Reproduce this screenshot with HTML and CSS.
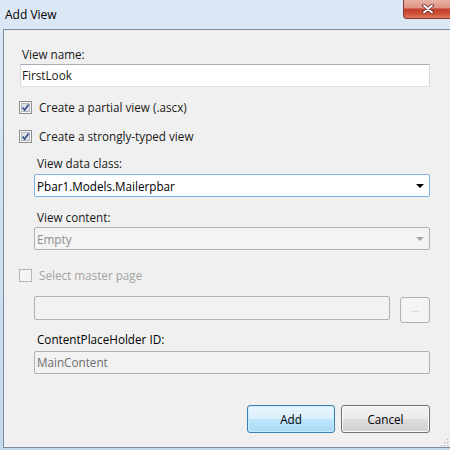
FILE: index.html
```html
<!DOCTYPE html>
<html>
<head>
<meta charset="utf-8">
<link rel="stylesheet" href="styles.css">
</head>
<body>
<div class="window">
  <div class="titlebar">
    <span class="title">Add View</span>
    <div class="close">
      <svg width="12" height="10" viewBox="0 0 12 10">
        <path d="M2 1.5 L10 8.5 M10 1.5 L2 8.5" stroke="#5b2420" stroke-width="3.6" stroke-linecap="round" fill="none"/>
        <path d="M2 1.5 L10 8.5 M10 1.5 L2 8.5" stroke="#ffffff" stroke-width="1.9" stroke-linecap="round" fill="none"/>
      </svg>
    </div>
  </div>
  <div class="client">
    <div class="form">
      <div class="lbl first">View name:</div>
      <div class="tb name">FirstLook</div>

      <div class="chk c1">
        <svg class="cb" width="13" height="13" viewBox="0 0 13 13">
          <rect x="0.5" y="0.5" width="12" height="12" fill="#f6f6f6" stroke="#8e8f8f"/>
          <rect x="2.5" y="2.5" width="8" height="8" fill="#dfe3ea" stroke="#b4b9c1"/>
          <path d="M3.6 6.4 L5.6 9 L9.6 3.4" fill="none" stroke="#3d548a" stroke-width="1.7"/>
        </svg>
        <span>Create a partial view (.ascx)</span>
      </div>

      <div class="chk c2">
        <svg class="cb" width="13" height="13" viewBox="0 0 13 13">
          <rect x="0.5" y="0.5" width="12" height="12" fill="#f6f6f6" stroke="#8e8f8f"/>
          <rect x="2.5" y="2.5" width="8" height="8" fill="#dfe3ea" stroke="#b4b9c1"/>
          <path d="M3.6 6.4 L5.6 9 L9.6 3.4" fill="none" stroke="#3d548a" stroke-width="1.7"/>
        </svg>
        <span>Create a strongly-typed view</span>
      </div>

      <div class="lbl ind l-class">View data class:</div>
      <div class="combo focus">
        <span>Pbar1.Models.Mailerpbar</span>
        <svg width="8" height="4" viewBox="0 0 8 4"><path d="M0 0 H8 L4 4 Z" fill="#000"/></svg>
      </div>

      <div class="lbl ind l-content">View content:</div>
      <div class="combo disabled">
        <span>Empty</span>
        <svg width="8" height="4" viewBox="0 0 8 4"><path d="M0 0 H8 L4 4 Z" fill="#a6a6a6"/></svg>
      </div>

      <div class="chk c3 off">
        <svg class="cb" width="13" height="13" viewBox="0 0 13 13">
          <rect x="0.5" y="0.5" width="12" height="12" fill="#f4f4f4" stroke="#b7b7b7"/>
        </svg>
        <span>Select master page</span>
      </div>

      <div class="master">
        <div class="tb dis path"></div>
        <div class="browse">...</div>
      </div>

      <div class="lbl ind l-cph">ContentPlaceHolder ID:</div>
      <div class="tb dis cph">MainContent</div>

      <div class="buttons">
        <div class="btn add">Add</div>
        <div class="btn cancel">Cancel</div>
      </div>
    </div>
    <svg class="grip" width="9" height="9" viewBox="0 0 9 9">
      <rect x="7" y="1" width="1.4" height="1.4" fill="#b8b8b8"/>
      <rect x="4" y="4" width="1.4" height="1.4" fill="#b8b8b8"/>
      <rect x="7" y="4" width="1.4" height="1.4" fill="#b8b8b8"/>
      <rect x="1" y="7" width="1.4" height="1.4" fill="#b8b8b8"/>
      <rect x="4" y="7" width="1.4" height="1.4" fill="#b8b8b8"/>
      <rect x="7" y="7" width="1.4" height="1.4" fill="#b8b8b8"/>
    </svg>
  </div>
</div>
</body>
</html>
```

FILE: styles.css
```css
html, body {
  margin: 0;
  padding: 0;
}
body {
  font-family: "Open Sans", "Noto Sans", sans-serif;
  font-size: 11.7px;
  color: #1a1a1a;
}
.window {
  width: 450px;
  height: 450px;
  overflow: hidden;
  background: linear-gradient(#dce8f6, #c4d8ee);
}
.titlebar {
  height: 29px;
  display: flex;
  align-items: flex-start;
}
.title {
  font-size: 12px;
  line-height: 29px;
  padding-left: 5px;
  color: #000;
}
.close {
  margin-left: auto;
  margin-right: -3px;
  width: 50px;
  height: 19px;
  box-sizing: border-box;
  border: 1px solid #8a3a31;
  border-top: none;
  border-radius: 0 0 0 4px;
  background: linear-gradient(#e9b2a6 0%, #df9483 42%, #c3402f 52%, #cf5238 78%, #de7a5c 100%);
  display: flex;
  align-items: center;
  justify-content: center;
}
.close svg {
  display: block;
}
.client {
  margin-left: 3px;
  width: 446px;
  height: 417px;
  background: #f0f0f0;
  border: 1px solid #7d8a99;
}
.form {
  padding: 16px 0 0 16px;
  width: 410px;
}
.lbl {
  height: 16px;
  line-height: 16px;
  padding-left: 2px;
  white-space: nowrap;
}
.lbl.ind {
  margin-left: 14px;
  padding-left: 3px;
}
.tb {
  box-sizing: border-box;
  height: 23px;
  line-height: 21px;
  border: 1px solid;
  border-color: #abadb3 #d5d9df #dde2e8 #d5d9df;
  border-radius: 1px;
  background: #fff;
  padding-left: 1px;
  white-space: nowrap;
}
.tb.name {
  margin-top: 2px;
}
.chk {
  display: flex;
  align-items: center;
  gap: 7px;
  height: 16px;
  margin-left: -1px;
  white-space: nowrap;
}
.cb {
  display: block;
  flex: none;
}
.c1 { margin-top: 12px; }
.c2 { margin-top: 13px; }
.c3 { margin-top: 17px; }
.chk.off { color: #a3a3a3; }
.l-class { margin-top: 11px; }
.l-content { margin-top: 12px; }
.l-cph { margin-top: 8px; color: #000; }
.combo {
  box-sizing: border-box;
  height: 23px;
  margin-left: 14px;
  display: flex;
  align-items: center;
  justify-content: space-between;
  padding: 0 5px 0 2px;
  border: 1px solid;
  border-radius: 2px;
}
.combo svg {
  display: block;
}
.combo.focus {
  margin-top: 3px;
  background: #fff;
  border-color: #7eb4ea;
  color: #000;
}
.combo.disabled {
  margin-top: 2px;
  background: #f4f4f4;
  border-color: #adb2b5;
  color: #8d8d8d;
}
.master {
  display: flex;
  align-items: flex-start;
  gap: 10px;
  margin-top: 13px;
  margin-left: 14px;
}
.tb.dis {
  background: #f2f2f2;
  border-color: #afb1b5;
  border-radius: 2px;
  color: #6d6d6d;
  padding-left: 2px;
}
.tb.path {
  width: 356px;
  height: 24px;
}
.browse {
  box-sizing: border-box;
  width: 30px;
  height: 26px;
  margin-top: 1px;
  border: 1px solid #adb2b5;
  border-radius: 3px;
  background: #f4f4f4;
  color: #9a9a9a;
  font-size: 8px;
  line-height: 22px;
  text-align: center;
  letter-spacing: 0.5px;
}
.tb.cph {
  margin-left: 14px;
  margin-top: 4px;
}
.buttons {
  display: flex;
  justify-content: flex-end;
  gap: 6px;
  margin-top: 31px;
}
.btn {
  box-sizing: border-box;
  height: 28px;
  line-height: 26px;
  text-align: center;
  border-radius: 3px;
  color: #000;
}
.btn.add {
  width: 88px;
  border: 1px solid #3c7fb1;
  background: linear-gradient(#eaf6fd 0%, #d9f0fc 48%, #bee6fd 52%, #a7d9f5 100%);
  box-shadow: inset 0 0 0 1px #c9ecfb;
}
.btn.cancel {
  width: 89px;
  border: 1px solid #707070;
  background: linear-gradient(#f2f2f2 0%, #ebebeb 48%, #dddddd 52%, #cfcfcf 100%);
  box-shadow: inset 0 0 0 1px #fbfbfb;
}
.grip {
  display: block;
  margin: 5px 1px 0 auto;
}
```
